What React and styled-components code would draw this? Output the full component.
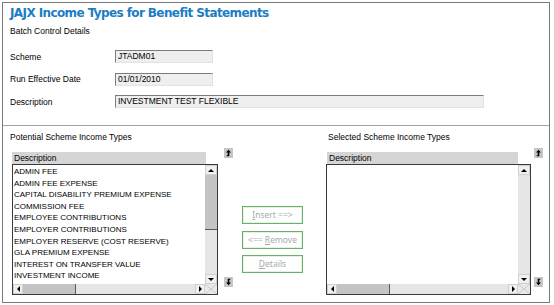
import React from 'react';
import styled, { createGlobalStyle } from 'styled-components';

const POTENTIAL = [
  'ADMIN FEE',
  'ADMIN FEE EXPENSE',
  'CAPITAL DISABILITY PREMIUM EXPENSE',
  'COMMISSION FEE',
  'EMPLOYEE CONTRIBUTIONS',
  'EMPLOYER CONTRIBUTIONS',
  'EMPLOYER RESERVE (COST RESERVE)',
  'GLA PREMIUM EXPENSE',
  'INTEREST ON TRANSFER VALUE',
  'INVESTMENT INCOME',
];

const GlobalStyle = createGlobalStyle`
  html, body {
    margin: 0;
    padding: 0;
    background: #fff;
  }
  body {
    font-family: 'Liberation Sans', Arial, sans-serif;
    color: #000;
  }
`;

const Page = styled.div`
  width: 554px;
  height: 305px;
  padding: 2px;
  box-sizing: border-box;
`;

const Frame = styled.div`
  width: 548px;
  height: 301px;
  box-sizing: border-box;
  border: 1px solid #7a7a7a;
  display: flex;
  flex-direction: column;
`;

const Title = styled.h1`
  margin: 0;
  padding-left: 7px;
  height: 20px;
  line-height: 20px;
  font-family: 'DejaVu Sans', Verdana, sans-serif;
  font-size: 12px;
  font-weight: bold;
  color: #1b7dc3;
  letter-spacing: -0.6px;
  white-space: nowrap;
`;

const SmallText = styled.div`
  font-size: 8.5px;
  line-height: 12px;
  height: 12px;
  white-space: nowrap;
`;

const SectionLabel = styled(SmallText)`
  margin: 2px 0 0 7px;
`;

const Fields = styled.div`
  display: grid;
  grid-template-columns: 105px auto;
  row-gap: 9.5px;
  margin: 13px 0 0 7px;
  align-items: center;
`;

const FieldInput = styled.div`
  width: ${(p) => p.$width}px;
  height: 13px;
  box-sizing: border-box;
  background: #efefef;
  border-top: 1px solid #7c7c7c;
  border-left: 1px solid #7c7c7c;
  border-right: 1px solid #e2e2e2;
  border-bottom: 1px solid #e2e2e2;
  font-size: 8.5px;
  line-height: 11px;
  padding-left: 2px;
  white-space: nowrap;
`;

const Divider = styled.div`
  height: 1px;
  background: #a3a3a3;
  margin-top: 17px;
`;

const Lower = styled.div`
  display: flex;
  align-items: flex-start;
  padding-left: 9px;
`;

const Panel = styled.div`
  display: flex;
  flex-direction: column;
  margin-left: ${(p) => p.$offset || 0}px;
`;

const PanelLabel = styled(SmallText)`
  margin-top: 5px;
  margin-left: ${(p) => p.$shift || 0}px;
`;

const TableRow = styled.div`
  display: flex;
  margin-top: 9px;
`;

const Table = styled.div`
  width: ${(p) => p.$width}px;
  display: flex;
  flex-direction: column;
`;

const TableHeader = styled(SmallText)`
  width: ${(p) => p.$width}px;
  background: #d5d5d5;
  padding-left: 2px;
  box-sizing: border-box;
  margin-left: ${(p) => p.$shift || 0}px;
`;

const ListBox = styled.div`
  height: 131px;
  box-sizing: border-box;
  border: 1px solid #3a3a3a;
  display: grid;
  grid-template-columns: 1fr 12px;
  grid-template-rows: 1fr 10px;
  background: #fff;
`;

const Items = styled.div`
  overflow: hidden;
  padding: 1px 0 0 1px;
`;

const Item = styled.div`
  font-size: 8px;
  line-height: 11.6px;
  height: 11.6px;
  white-space: nowrap;
`;

const VScroll = styled.div`
  display: flex;
  flex-direction: column;
  background: #e6e6e6;
`;

const HScroll = styled.div`
  display: flex;
  background: #e6e6e6;
`;

const ScrollBtn = styled.div`
  flex: 0 0 10px;
  background: #f0f0f0;
  display: flex;
  align-items: center;
  justify-content: center;
  box-sizing: border-box;
  border: 1px solid #d0d0d0;
  &::after {
    content: '';
    width: 0;
    height: 0;
    ${(p) =>
      p.$dir === 'up'
        ? 'border-left: 3px solid transparent; border-right: 3px solid transparent; border-bottom: 3px solid #000;'
        : p.$dir === 'down'
        ? 'border-left: 3px solid transparent; border-right: 3px solid transparent; border-top: 3px solid #000;'
        : p.$dir === 'left'
        ? 'border-top: 3px solid transparent; border-bottom: 3px solid transparent; border-right: 3px solid #000;'
        : 'border-top: 3px solid transparent; border-bottom: 3px solid transparent; border-left: 3px solid #000;'}
  }
`;

const VThumb = styled.div`
  flex: 0 0 ${(p) => p.$size}px;
  background: #c4c4c4;
  border-bottom: 1px solid #5a5a5a;
  box-sizing: border-box;
`;

const HThumb = styled.div`
  flex: 0 0 ${(p) => p.$size}px;
  background: #c4c4c4;
  border-right: 1px solid #5a5a5a;
  box-sizing: border-box;
`;

const Track = styled.div`
  flex: 1;
`;

const Corner = styled.div`
  background: #e9e9e9;
  display: flex;
`;

const ArrowCol = styled.div`
  height: 139px;
  margin-top: -4px;
  margin-left: ${(p) => p.$gap}px;
  display: flex;
  flex-direction: column;
  justify-content: space-between;
`;

const MoveIcon = styled.div`
  width: 9px;
  height: 10px;
  background: #c6c6c6;
  display: flex;
  align-items: center;
  justify-content: center;
`;

const ButtonCol = styled.div`
  display: flex;
  flex-direction: column;
  gap: 6.5px;
  margin-left: 9px;
  padding-top: 80px;
`;

const ActionButton = styled.button`
  width: 61px;
  height: 18px;
  box-sizing: border-box;
  border: 1px solid #68b268;
  box-shadow: inset 0 0 0 1px #e4f1e4;
  background: #fff;
  color: #a9a9a9;
  font-family: 'Noto Sans', 'Open Sans', sans-serif;
  font-size: 8.5px;
  padding: 0;
  line-height: 14px;
  white-space: nowrap;
`;

const ArrowGlyph = ({ down }) => (
  <svg width="7" height="8" viewBox="0 0 7 8">
    <g transform={down ? 'rotate(180 3.5 4)' : undefined}>
      <path d="M3.5 0.8 L6 3.6 L4.3 3.6 L4.3 7.2 L1.6 7.2 L1.6 6.3 L2.7 6.3 L2.7 3.6 L1 3.6 Z" fill="#000" />
    </g>
  </svg>
);

const CornerGrip = () => (
  <svg width="12" height="10" viewBox="0 0 12 10">
    <path d="M0 0 L12 10 M12 0 L0 10" stroke="#c8c8c8" strokeWidth="1" />
  </svg>
);

const ListTable = ({ width, headerWidth, headerShift, items, vThumb }) => (
  <Table $width={width}>
    <TableHeader $width={headerWidth} $shift={headerShift}>Description</TableHeader>
    <ListBox>
      <Items>
        {items.map((it) => (
          <Item key={it}>{it}</Item>
        ))}
      </Items>
      <VScroll>
        <ScrollBtn $dir="up" />
        {vThumb ? <VThumb $size={vThumb} /> : null}
        <Track />
        <ScrollBtn $dir="down" />
      </VScroll>
      <HScroll>
        <ScrollBtn $dir="left" />
        <HThumb $size={53} />
        <Track />
        <ScrollBtn $dir="right" />
      </HScroll>
      <Corner>
        <CornerGrip />
      </Corner>
    </ListBox>
  </Table>
);

const Arrows = ({ gap }) => (
  <ArrowCol $gap={gap}>
    <MoveIcon>
      <ArrowGlyph />
    </MoveIcon>
    <MoveIcon>
      <ArrowGlyph down />
    </MoveIcon>
  </ArrowCol>
);

export default function App() {
  return (
    <Page>
      <GlobalStyle />
      <Frame>
        <Title>JAJX Income Types for Benefit Statements</Title>
        <SectionLabel>Batch Control Details</SectionLabel>
        <Fields>
          <SmallText>Scheme</SmallText>
          <FieldInput $width={98}>JTADM01</FieldInput>
          <SmallText>Run Effective Date</SmallText>
          <FieldInput $width={98}>01/01/2010</FieldInput>
          <SmallText>Description</SmallText>
          <FieldInput $width={369}>INVESTMENT TEST FLEXIBLE</FieldInput>
        </Fields>
        <Divider />
        <Lower>
          <Panel>
            <PanelLabel $shift={-2}>Potential Scheme Income Types</PanelLabel>
            <TableRow>
              <ListTable width={206} headerWidth={194} items={POTENTIAL} vThumb={55} />
              <Arrows gap={6} />
            </TableRow>
          </Panel>
          <ButtonCol>
            <ActionButton disabled>
              <u>I</u>nsert ==&gt;
            </ActionButton>
            <ActionButton disabled>
              &lt;== <u>R</u>emove
            </ActionButton>
            <ActionButton disabled>
              <u>D</u>etails
            </ActionButton>
          </ButtonCol>
          <Panel $offset={23}>
            <PanelLabel $shift={2}>Selected Scheme Income Types</PanelLabel>
            <TableRow>
              <ListTable width={205} headerWidth={191} headerShift={1} items={[]} />
              <Arrows gap={3} />
            </TableRow>
          </Panel>
        </Lower>
      </Frame>
    </Page>
  );
}
